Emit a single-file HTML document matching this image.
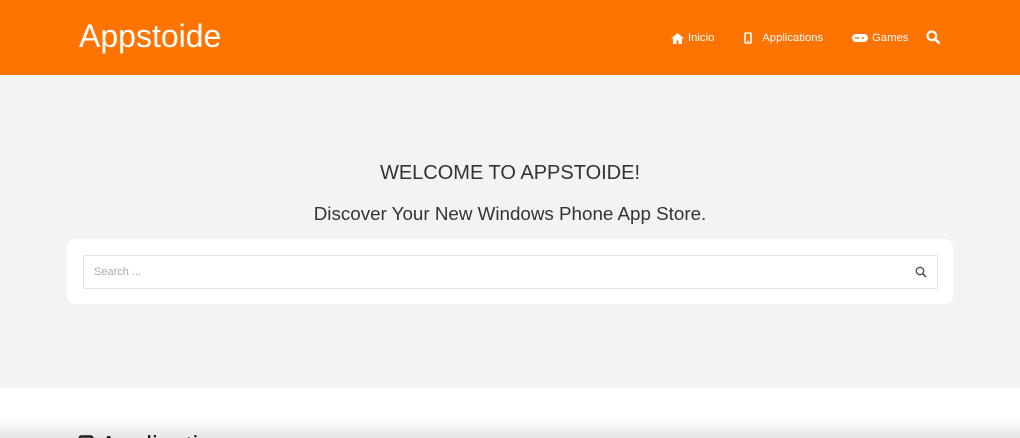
<!DOCTYPE html>
<html style="width:1020px;height:438px;overflow:hidden"><head><meta charset="utf-8"><style>
*{margin:0;padding:0;box-sizing:border-box}
body{width:1020px;height:438px;overflow:hidden;font-family:"Liberation Sans",sans-serif;background:#fff;position:relative}
.hdr{height:75px;background:#ff7300;position:relative;color:#fff}
.logo{position:absolute;left:79px;top:18px;font-size:32px}
.nav{position:absolute;top:32px;font-size:11.3px;display:flex;align-items:center;gap:4px}
.hero{height:313px;background:#f2f3f5;position:relative;text-align:center;color:#333}
.h1{position:absolute;top:87px;width:100%;font-size:20px}
.h2{position:absolute;top:128px;width:100%;font-size:18.8px}
.box{position:absolute;left:67px;top:164px;width:886px;height:65px;background:#fff;border-radius:8px}
.inp{position:absolute;left:16px;top:16px;width:855px;height:34px;border:1px solid #e4e4e4;border-radius:2px;font-size:11px;color:#aaa;padding:10px 10px;text-align:left}
.clip{position:absolute;left:0;top:400px;width:1020px;height:38px;overflow:hidden}
.apps{position:absolute;left:78px;top:30px;font-size:26px;color:#222;display:flex;gap:6px;align-items:center}
.shade{position:absolute;left:0;top:418px;width:1020px;height:20px;background:linear-gradient(#fff0,#0000001a)}
</style></head><body>
<div class="hdr">
<div class="logo">Appstoide</div>
<div class="nav" style="left:671px"><svg width="13" height="11" viewBox="0 0 13 11"><path d="M6.5 0L0 5.5h2V11h3.5V7.5h2V11H11V5.5h2z" fill="#fff"/></svg>Inicio</div>
<div class="nav" style="left:744px"><svg width="8" height="12" viewBox="0 0 8 12"><rect x="1" y="1" width="6" height="10" rx="1" fill="none" stroke="#fff" stroke-width="1.6"/><circle cx="4" cy="9" r=".8" fill="#fff"/></svg>&nbsp;&nbsp;Applications</div>
<div class="nav" style="left:852px"><svg width="16" height="10" viewBox="0 0 16 10"><rect x="0" y="1" width="16" height="8" rx="4" fill="#fff"/><rect x="3" y="4.3" width="4" height="1.4" fill="#ff7300"/><circle cx="11" cy="5" r="1" fill="#ff7300"/></svg>Games</div>
<svg style="position:absolute;left:926px;top:30px" width="14" height="14" viewBox="0 0 14 14"><circle cx="5.8" cy="5.8" r="4.3" fill="none" stroke="#fff" stroke-width="2.2"/><path d="M9 9l4 4" stroke="#fff" stroke-width="2.6" stroke-linecap="round"/></svg>
</div>
<div class="hero">
<div class="h1">WELCOME TO APPSTOIDE!</div>
<div class="h2">Discover Your New Windows Phone App Store.</div>
<div class="box"><div class="inp">Search ...
<svg style="position:absolute;right:10px;top:10px" width="12" height="12" viewBox="0 0 12 12"><circle cx="5" cy="5" r="3.7" fill="none" stroke="#555" stroke-width="1.4"/><path d="M7.8 7.8l3.2 3.2" stroke="#555" stroke-width="1.6"/></svg></div></div>
</div>
<div class="clip"><div class="apps"><svg width="16" height="22" viewBox="0 0 16 22"><rect x="1.5" y="1.5" width="13" height="20" rx="2" fill="none" stroke="#222" stroke-width="2.5"/></svg>Applications</div></div>
<div class="shade"></div>
</body></html>
